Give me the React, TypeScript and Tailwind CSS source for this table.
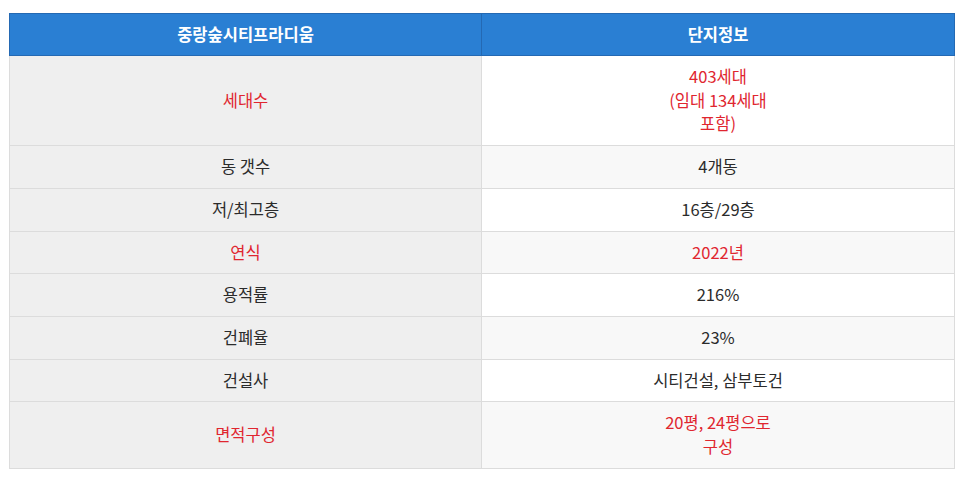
import React from "react";

const rows: { k: string; v: React.ReactNode; red?: boolean }[] = [
  { k: "세대수", v: <>403세대<br />(임대 134세대<br />포함)</>, red: true },
  { k: "동 갯수", v: "4개동" },
  { k: "저/최고층", v: "16층/29층" },
  { k: "연식", v: "2022년", red: true },
  { k: "용적률", v: "216%" },
  { k: "건폐율", v: "23%" },
  { k: "건설사", v: "시티건설, 삼부토건" },
  { k: "면적구성", v: <>20평, 24평으로<br />구성</>, red: true },
];

export default function App() {
  return (
    <div
      className="w-[963px] h-[481px] bg-white pt-[13px] pl-[9px]"
      style={{ fontFamily: '"Noto Sans CJK KR", "Noto Sans", sans-serif' }}
    >
      <div className="w-[946px] text-[16.5px] leading-[23.7px] text-center border-x border-b border-[#dcdcdc]">
        <div className="flex bg-[#2a7fd3] text-white font-bold h-[43px] -mx-px border border-[#2469b3]">
          <div className="w-1/2 flex items-center justify-center border-r border-[#2469b3]">중랑숲시티프라디움</div>
          <div className="w-1/2 flex items-center justify-center">단지정보</div>
        </div>
        {rows.map((r, i) => (
          <div key={i} className={`flex border-b border-[#dcdcdc] last:border-b-0 ${r.red ? "text-[#e0262f]" : "text-[#2b2b2b]"}`}>
            <div className="w-1/2 py-[9px] flex items-center justify-center bg-[#efefef] border-r border-[#dcdcdc]">
              {r.k}
            </div>
            <div className={`w-1/2 py-[9px] flex items-center justify-center ${i % 2 === 1 ? "bg-[#f8f8f8]" : "bg-white"}`}>
              <div>{r.v}</div>
            </div>
          </div>
        ))}
      </div>
    </div>
  );
}
